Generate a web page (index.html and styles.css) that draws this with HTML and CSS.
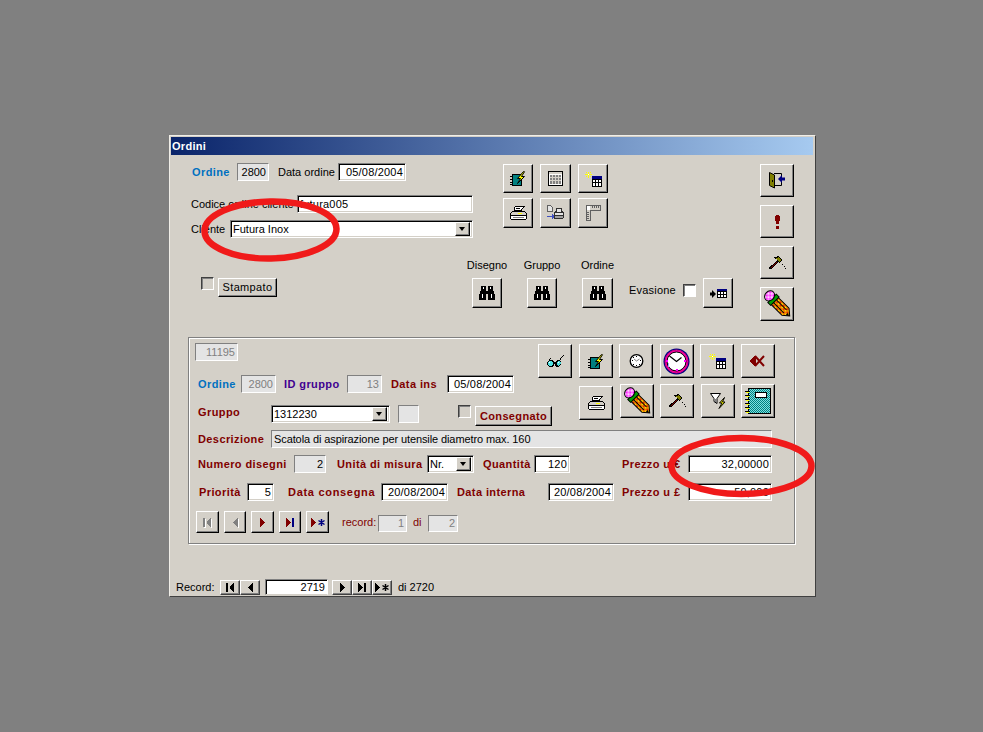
FILE: index.html
```html
<!DOCTYPE html>
<html lang="it">
<head>
<meta charset="utf-8">
<title>Ordini</title>
<link rel="stylesheet" href="styles.css">
</head>
<body>
<svg class="sprite" width="0" height="0" aria-hidden="true">
  <defs>
    <pattern id="pk" width="2" height="2" patternUnits="userSpaceOnUse"><rect width="2" height="2" fill="#fff"/><rect width="1" height="1" fill="#f0f"/><rect x="1" y="1" width="1" height="1" fill="#f0f"/></pattern>
    <pattern id="yr" width="2" height="2" patternUnits="userSpaceOnUse"><rect width="2" height="2" fill="#ff0"/><rect width="1" height="1" fill="#d00"/><rect x="1" y="1" width="1" height="1" fill="#d00"/></pattern>
    <pattern id="tl" width="2" height="2" patternUnits="userSpaceOnUse"><rect width="2" height="2" fill="#008080"/><rect width="1" height="1" fill="#7fe0e0"/><rect x="1" y="1" width="1" height="1" fill="#7fe0e0"/></pattern>
    <pattern id="mg" width="2" height="2" patternUnits="userSpaceOnUse"><rect width="2" height="2" fill="#f0a"/><rect width="1" height="1" fill="#e00090"/></pattern>
  </defs>
  <symbol id="bino" viewBox="0 0 16 14">
    <path fill="#000" d="M2 0h5v5h2V0h5v5h1v3h1v6H9V8H7v6H0V8h1V5h1z"/>
    <path fill="#fff" d="M3 8h1v4H3zM12 8h1v4h-1zM4 1h1v2H4zM11 1h1v2h-1z"/>
  </symbol>
  <symbol id="book" viewBox="0 0 16 15">
    <path fill="#000" d="M2 3h10v12H2z"/>
    <path fill="#008080" d="M3 4h8v10H3z"/>
    <path fill="#000" d="M0 5h3v1H0zM0 8h3v1H0zM0 11h3v1H0zM0 13h3v1H0z"/>
    <path fill="#ff0" stroke="#000" stroke-width="1" d="M13.500 .5 7.500 7.500h3l-3 5 7-7h-3l3-4.800z"/>
  </symbol>
  <symbol id="grid" viewBox="0 0 15 15">
    <path fill="#000" d="M0 0h15v15H0z"/>
    <path fill="#fff" d="M1 1h13v13H1z"/>
    <path fill="#d4d0c8" d="M1 1h13v2H1z"/>
    <path fill="#808080" d="M2 4h11v9H2z"/>
    <path fill="#d4d0c8" d="M4 4h1v9H4zM7 4h1v9H7zM10 4h1v9h-1zM2 6h11v1H2zM2 9h11v1H2z"/>
  </symbol>
  <symbol id="newtable" viewBox="0 0 17 16">
    <path fill="#ff0" d="M3 1h1v6H3zM0 3h7v1H0zM1 1h1v1H1zM5 1h1v1H5zM1 5h1v1H1zM5 5h1v1H5z"/>
    <path fill="#fff" d="M3 3h1v1H3z"/>
    <path fill="#000" d="M7 5h10v11H7z"/>
    <path fill="#000080" d="M7 5h10v3H7z"/>
    <path fill="#fff" d="M8 9h2v2H8zM11 9h2v2h-2zM14 9h2v2h-2zM8 12h2v3H8zM11 12h2v3h-2zM14 12h2v3h-2z"/>
  </symbol>
  <symbol id="print" viewBox="0 0 17 14">
    <path fill="#000" d="M5 0h10v1h-1v1h-1v1h-1v3h-2V5H4V1h1z"/>
    <path fill="#fff" d="M5 1h8v1h-1v1h-1v1H5z"/>
    <path fill="#000" d="M6 2h4v1H6z"/>
    <path fill="#000" d="M2 5h13v1h1v1h1v6h-1v1H1v-1H0V7h1V6h1z"/>
    <path fill="#d4d0c8" d="M2 6h13v1h1v2H1V7h1z"/>
    <path fill="#fff" d="M1 10h15v3H1z"/>
    <path fill="#000" d="M1 9h15v1H1z"/>
    <path fill="#ff0" d="M8 7h4v1H8z"/>
    <path fill="#808080" d="M3 11h11v1H3z"/>
  </symbol>
  <symbol id="preview" viewBox="0 0 17 17">
    <path fill="#606060" d="M0 0h4v1h1v1h1v5H0z"/>
    <path fill="#e4e4e4" d="M1 1h3v1h1v4H1z"/>
    <path fill="#4050c0" d="M0 11h5V9h1v1h1v1h1v1H7v1H6v1H5v-2H0z"/>
    <path fill="#303030" d="M9 3h6v3h1v1h1v6h-1v1H7V7h1V6h1z"/>
    <path fill="#e4e4e4" d="M10 4h4v3h-4zM8 8h8v2H8z"/>
    <path fill="#a0a0a0" d="M8 11h8v2H8z"/>
  </symbol>
  <symbol id="ruler" viewBox="0 0 16 16">
    <path fill="#606060" d="M1 0h15v6H6v10H1z"/>
    <path fill="#d4d0c8" d="M2 1h13v4H5v10H2z"/>
    <path fill="#606060" d="M7 1h1v2H7zM9 1h1v2H9zM11 1h1v2h-1zM13 1h1v2h-1zM2 7h2v1H2zM2 9h2v1H2zM2 11h2v1H2zM2 13h2v1H2z"/>
    <path fill="#fff" d="M2 1h3v4H2z"/>
  </symbol>
  <symbol id="door" viewBox="0 0 16 17">
    <path fill="none" stroke="#000" d="M5 1.500h7.500V4M5 13.500h7.500V10"/>
    <path fill="#808000" stroke="#000" d="M.5 .5l5 2.500v13l-5-2.500z"/>
    <path fill="#000" d="M3 8h1v2H3z"/>
    <path fill="#000080" d="M16 5.500h-3V3L9 7l4 4V8.500h3z"/>
  </symbol>
  <symbol id="bang" viewBox="0 0 5 14">
    <path fill="#800000" d="M1 0h3v1h1v5H4v3H1V6H0V1h1zM1 11h3v3H1z"/>
  </symbol>
  <symbol id="pick" viewBox="0 0 17 14">
    <path fill="#000" d="M5 1h3V0h2v1h1v1h1v1h1v2h-1v1h-1v1h-1V6H9v1H8v1H7v1H6v1H5v1H4v1H3v1H0v-2h1v-1h1v-1h1V9h1V8h1V7h1V6h1V5h1V4H8V3H6V2H5z"/>
    <path fill="#808000" d="M7 2h2V1h1v1h1v1h1v2h-1v1h-1V5H9V4H8V3H7z"/>
    <path fill="#800000" d="M1 12h1v-1h1v-1h1V9h1V8h1V7h1V6h1v1H7v1H6v1H5v1H4v1H3v1H1z"/>
    <path fill="#000" d="M13 8h1v1h-1zM15 10h1v1h-1zM16 12h1v1h-1z"/>
  </symbol>
  <symbol id="pencil" viewBox="0 0 28 29">
    <g transform="rotate(-45 14 14)">
      <path fill="url(#yr)" stroke="#000" d="M9.500 10.500h10v15l-5 6-5-6z"/>
      <path fill="#000" d="M12 11h1v14h-1zM16 11h1v14h-1z"/>
      <path fill="#000" d="M12.500 28h3l-1.500 3z"/>
      <path fill="#00a000" stroke="#000" d="M8.500 6.500h12v4h-12z"/>
      <ellipse cx="14.500" cy="3" rx="5.500" ry="4.500" fill="url(#pk)" stroke="#000"/>
    </g>
  </symbol>
  <symbol id="arrowtable" viewBox="0 0 17 9">
    <path fill="#000" d="M0 3h2V1h1v1h1v1h1v1h1v1H5v1H4v1H3v1H2V6H0z" transform="translate(0 .5)"/>
    <path fill="#000" d="M7 0h10v9H7z"/>
    <path fill="#000080" d="M7 0h10v2H7z"/>
    <path fill="#fff" d="M8 3h2v2H8zM11 3h2v2h-2zM14 3h2v2h-2zM8 6h2v2H8zM11 6h2v2h-2zM14 6h2v2h-2z"/>
  </symbol>
  <symbol id="glasses" viewBox="0 0 17 12">
    <path fill="#000" d="M1 6h1V5h4v1h1v1h2V6h1V5h3v1h1v4h-1v1h-1v1h-3v-1h-1V9H7v2H6v1H2v-1H1v-1H0V7h1z"/>
    <path fill="#4fe0e0" d="M2 6h3v1h1v3H5v1H2v-1H1V7h1zM11 6h2v1h1v2h-1v1h-1v1h-1v-1h-1V7h1z"/>
    <path fill="#fff" d="M2 7h1v1H2zM11 7h1v1h-1z"/>
    <path fill="#000" d="M2 4h1v1H2zM3 3h1v1H3zM13 3h1v2h-1zM14 2h1v1h-1zM15 1h1v1h-1zM16 0h1v1h-1z"/>
  </symbol>
  <symbol id="clocksm" viewBox="0 0 15 14">
    <circle cx="7.500" cy="7" r="6.300" fill="#fff" stroke="#000" stroke-width="1.300"/>
    <path fill="#000" d="M7 2h1v1H7zM3 6h1v1H3zM11 6h1v1h-1zM7 11h1v1H7zM4 3h1v1H4zM10 10h1v1h-1zM4 10h1v1H4z"/>
    <path stroke="#808080" d="M7.500 7 5 5M7.500 7l3-2"/>
  </symbol>
  <symbol id="clockbig" viewBox="0 0 27 27">
    <circle cx="13.500" cy="13.500" r="13" fill="#000080"/>
    <circle cx="13.500" cy="13.500" r="11.500" fill="url(#mg)" stroke="#d00080"/>
    <circle cx="13.500" cy="13.500" r="9.500" fill="#fff" stroke="#000"/>
    <path fill="none" stroke="#000" stroke-width="1.200" d="M6.500 8l7 5.500 5-4"/>
    <path fill="#f0f" d="M13 21h2v2h-2zM3 12h2v2H3zM21 12h2v2h-2z"/>
    <path fill="#a0a0ff" d="M5 15h1v4H5z"/>
  </symbol>
  <symbol id="xarrow" viewBox="0 0 15 12">
    <path fill="#800000" d="M0 5h1V4h1V3h1V2h1V1h2v10H4v-1H3V9H2V8H1V7H0z"/>
    <path fill="none" stroke="#800000" stroke-width="2" d="M5 1l9 10M14 1L5 11"/>
  </symbol>
  <symbol id="filterbolt" viewBox="0 0 16 16">
    <path fill="#fff" stroke="#000" d="M.5 .5h10L7 5.500v5l-3-2v-3z"/>
    <path fill="#808080" d="M5 6h1v3H5z"/>
    <path fill="#ff0" stroke="#000" d="M14.500 4.500 9.500 10h2.500l-3 5.500 6-6.500h-2.500l2-4.500z"/>
  </symbol>
  <symbol id="bigbook" viewBox="0 0 26 26">
    <path fill="#000" d="M3 0h23v26H3z"/>
    <path fill="url(#tl)" d="M4 1h21v24H4z"/>
    <path fill="#000" d="M10 4h12v6H10z"/>
    <path fill="#fff" d="M11 5h10v4H11z"/>
    <path fill="#000" d="M0 3h5v1H0zM0 7h5v1H0zM0 11h5v1H0zM0 15h5v1H0zM0 19h5v1H0zM0 23h5v1H0z"/>
    <path fill="#ff0" d="M1 4h3v1H1zM1 8h3v1H1zM1 12h3v1H1zM1 16h3v1H1zM1 20h3v1H1zM1 24h3v1H1z"/>
  </symbol>
  <symbol id="n-first" viewBox="0 0 9 9"><path d="M0 0h2v9H0zM8 0v9H7V8H6V7H5V6H4V3h1V2h1V1h1V0z"/></symbol>
  <symbol id="n-prev" viewBox="0 0 9 9"><path d="M7 0v9H6V8H5V7H4V6H3V5H2V4h1V3h1V2h1V1h1V0z"/></symbol>
  <symbol id="n-next" viewBox="0 0 9 9"><path d="M2 0v9h1V8h1V7h1V6h1V5h1V4H6V3H5V2H4V1H3V0z"/></symbol>
  <symbol id="n-last" viewBox="0 0 9 9"><path d="M0 0v9h1V8h1V7h1V6h1V5h1V4H4V3H3V2H2V1H1V0z"/><path class="accent" d="M6 0h2v9H6z"/></symbol>
  <symbol id="n-new" viewBox="0 0 14 9"><path d="M0 0v9h1V8h1V7h1V6h1V5h1V4H4V3H3V2H2V1H1V0z"/><path class="star" fill="none" stroke-width="1.500" d="M10.500 1v7M7.500 2.500l6 4M13.500 2.500l-6 4"/></symbol>
</svg>

<main class="window">
  <header class="titlebar">Ordini</header>
  <div class="form">
    <section class="top">
      <div class="top-main">
        <div class="top-fields">
          <div class="fields">
            <div class="row row-order">
              <span class="lb lb-blue lb-first">Ordine</span>
              <span class="box w-32 text-dark">2800</span>
              <span class="lb ml-9 w-60">Data ordine</span>
              <span class="input w-68">05/08/2004</span>
            </div>
            <div class="row row-code">
              <span class="lb w-106">Codice ordine cliente</span>
              <span class="input text-left w-176">futura005</span>
            </div>
            <div class="row row-client">
              <span class="lb w-39">Cliente</span>
              <span class="input combo w-243"><span class="combo-text">Futura Inox</span><span class="combo-btn"></span></span>
            </div>
          </div>
          <div class="tool-grid">
            <button class="btn"><svg width="16" height="15"><use href="#book"/></svg></button>
            <button class="btn"><svg width="15" height="15"><use href="#grid"/></svg></button>
            <button class="btn"><svg width="17" height="16"><use href="#newtable"/></svg></button>
            <button class="btn"><svg width="17" height="14"><use href="#print"/></svg></button>
            <button class="btn"><svg width="17" height="17"><use href="#preview"/></svg></button>
            <button class="btn"><svg width="16" height="16"><use href="#ruler"/></svg></button>
          </div>
        </div>
        <div class="top-actions">
          <span class="check check-stamp"></span>
          <button class="btn btn-text btn-stamp">Stampato</button>
          <div class="finders">
            <div class="finder"><span class="lb finder-label">Disegno</span><button class="btn btn-find"><svg width="16" height="14"><use href="#bino"/></svg></button></div>
            <div class="finder"><span class="lb finder-label">Gruppo</span><button class="btn btn-find"><svg width="16" height="14"><use href="#bino"/></svg></button></div>
            <div class="finder finder-wide"><span class="lb finder-label">Ordine</span><button class="btn btn-find"><svg width="16" height="14"><use href="#bino"/></svg></button></div>
          </div>
          <div class="evasione">
            <span class="lb lb-spaced w-54">Evasione</span>
            <span class="check check-white"></span>
            <button class="btn btn-find ml-7"><svg width="17" height="9"><use href="#arrowtable"/></svg></button>
          </div>
        </div>
      </div>
      <div class="side-tools">
        <button class="btn btn-lg"><svg width="16" height="17"><use href="#door"/></svg></button>
        <button class="btn btn-lg"><svg width="5" height="14"><use href="#bang"/></svg></button>
        <button class="btn btn-lg"><svg width="17" height="14"><use href="#pick"/></svg></button>
        <button class="btn btn-lg"><svg width="28" height="29"><use href="#pencil"/></svg></button>
      </div>
    </section>

    <section class="panel">
      <div class="panel-upper">
        <div class="panel-fields">
          <span class="box box-id w-43">11195</span>
          <div class="row row-p1">
            <span class="lb lb-b lb-blue ml-3 w-43">Ordine</span>
            <span class="box w-35">2800</span>
            <span class="lb lb-b lb-purple ml-8 w-63">ID gruppo</span>
            <span class="box w-35">13</span>
            <span class="lb lb-b lb-red ml-9 w-56">Data ins</span>
            <span class="input w-67">05/08/2004</span>
          </div>
          <div class="row row-p2">
            <span class="lb lb-b lb-red ml-3 w-73">Gruppo</span>
            <span class="input combo w-119"><span class="combo-text">1312230</span><span class="combo-btn"></span></span>
            <span class="box ml-8 w-21 h-18"></span>
            <span class="check ml-39"></span>
            <button class="btn btn-text btn-conseg ml-4">Consegnato</button>
          </div>
        </div>
        <div class="panel-tools">
          <div class="tools-row tools-row-first">
            <button class="btn btn-lg"><svg width="17" height="12"><use href="#glasses"/></svg></button>
            <button class="btn btn-lg"><svg width="16" height="15"><use href="#book"/></svg></button>
            <button class="btn btn-lg"><svg width="15" height="14"><use href="#clocksm"/></svg></button>
            <button class="btn btn-lg"><svg width="27" height="27"><use href="#clockbig"/></svg></button>
            <button class="btn btn-lg"><svg width="17" height="16"><use href="#newtable"/></svg></button>
            <button class="btn btn-lg"><svg width="15" height="12"><use href="#xarrow"/></svg></button>
          </div>
          <div class="tools-row tools-row-second">
            <button class="btn btn-lg btn-drop"><svg width="17" height="14"><use href="#print"/></svg></button>
            <button class="btn btn-lg"><svg width="28" height="29"><use href="#pencil"/></svg></button>
            <button class="btn btn-lg"><svg width="17" height="14"><use href="#pick"/></svg></button>
            <button class="btn btn-lg"><svg width="16" height="16"><use href="#filterbolt"/></svg></button>
            <button class="btn btn-lg"><svg width="26" height="26"><use href="#bigbook"/></svg></button>
          </div>
        </div>
      </div>
      <div class="row">
        <span class="lb lb-b lb-red ml-3 w-73">Descrizione</span>
        <span class="box box-desc text-left text-dark w-501">Scatola di aspirazione per utensile diametro max. 160</span>
      </div>
      <div class="row row-p4">
        <span class="lb lb-b lb-red ml-3 w-96">Numero disegni</span>
        <span class="box w-32 text-dark">2</span>
        <span class="lb lb-b lb-red ml-11 w-90">Unità di misura</span>
        <span class="input combo w-47"><span class="combo-text">Nr.</span><span class="combo-btn"></span></span>
        <span class="lb lb-b lb-red ml-9 w-51">Quantità</span>
        <span class="input w-36">120</span>
        <span class="lb lb-b lb-red ml-52 w-66">Prezzo u €</span>
        <span class="input w-84">32,00000</span>
      </div>
      <div class="row row-p5">
        <span class="lb lb-b lb-red ml-4 w-48">Priorità</span>
        <span class="input w-27">5</span>
        <span class="lb lb-b lb-wide lb-red ml-14 w-93">Data consegna</span>
        <span class="input w-67">20/08/2004</span>
        <span class="lb lb-b lb-red ml-9 w-91">Data interna</span>
        <span class="input w-66">20/08/2004</span>
        <span class="lb lb-b lb-red ml-8 w-66">Prezzo u £</span>
        <span class="input w-84">59,000</span>
      </div>
      <div class="row row-p6">
        <div class="pager">
          <button class="btn btn-nav off w-23"><svg width="9" height="9"><use href="#n-first"/></svg></button>
          <button class="btn btn-nav off w-22"><svg width="9" height="9"><use href="#n-prev"/></svg></button>
          <button class="btn btn-nav w-23 red"><svg width="9" height="9"><use href="#n-next"/></svg></button>
          <button class="btn btn-nav w-22 red"><svg width="9" height="9"><use href="#n-last"/></svg></button>
          <button class="btn btn-nav w-23 red"><svg width="14" height="9"><use href="#n-new"/></svg></button>
        </div>
        <span class="lb lb-red ml-13 w-36">record:</span>
        <span class="box box-sm w-29">1</span>
        <span class="lb lb-red ml-6 w-15">di</span>
        <span class="box box-sm w-30">2</span>
      </div>
    </section>

    <footer class="recordbar">
      <span class="lb w-44">Record:</span>
      <button class="btn btn-rec w-20"><svg width="9" height="9"><use href="#n-first"/></svg></button>
      <button class="btn btn-rec w-20"><svg width="9" height="9"><use href="#n-prev"/></svg></button>
      <span class="rec-input">2719</span>
      <button class="btn btn-rec w-20"><svg width="9" height="9"><use href="#n-next"/></svg></button>
      <button class="btn btn-rec w-20"><svg width="9" height="9"><use href="#n-last"/></svg></button>
      <button class="btn btn-rec w-20"><svg width="14" height="9"><use href="#n-new"/></svg></button>
      <span class="lb ml-6">di 2720</span>
    </footer>
  </div>
</main>

<svg class="marks" width="983" height="732" aria-hidden="true">
  <ellipse cx="270.500" cy="230" rx="66" ry="28.500" fill="none" stroke="#f01a1a" stroke-width="6.500" transform="rotate(-1 270 230)"/>
  <ellipse cx="741.500" cy="466" rx="70" ry="28" fill="none" stroke="#f01a1a" stroke-width="6.500"/>
</svg>
</body>
</html>
```

FILE: styles.css
```css
* { box-sizing: border-box; }

html, body { margin: 0; height: 100%; }

body {
  background: #808080;
  padding: 135px 0 0 169px;
  font: 11px/1 "Liberation Sans", Arial, sans-serif;
  color: #000;
  overflow: hidden;
}

.sprite { position: absolute; }

.marks {
  position: absolute;
  left: 0;
  top: 0;
  pointer-events: none;
  filter: blur(.4px);
}

svg { display: block; }

.window {
  width: 647px;
  height: 462px;
  background: #d4d0c8;
  border: 1px solid;
  border-color: #f0eee8 #404040 #404040 #f0eee8;
  padding: 1px;
}

.titlebar {
  height: 18px;
  width: 642px;
  padding-left: 1px;
  color: #fff;
  font-weight: 700;
  font-size: 11px;
  line-height: 18px;
  letter-spacing: .3px;
  background: linear-gradient(90deg, #0a246a, #a6caf0);
}

.form { width: 642px; }

/* shared controls */
.row { display: flex; align-items: center; height: 18px; }

.lb { display: block; white-space: nowrap; flex: none; }
.lb-spaced { letter-spacing: .2px; }
.lb-b { font-weight: 700; letter-spacing: .4px; }
.lb-wide { letter-spacing: .7px; }
.lb-blue { color: #0070c0; font-weight: 700; letter-spacing: .4px; }
.lb-first { width: 46px; padding-left: 1px; }
.lb-purple { color: #400090; }
.lb-red { color: #800000; }

.box, .input {
  display: flex;
  align-items: center;
  justify-content: flex-end;
  flex: none;
  height: 18px;
  padding: 0 2px;
  border: 1px solid;
  border-color: #808080 #fff #fff #808080;
  white-space: nowrap;
}

.box { background: #e4e4e4; color: #808080; }
.box-sm { height: 17px; margin-top: 3px; }
.input {
  background: #fff;
  box-shadow: inset 1px 1px 0 #000, inset -1px -1px 0 #d4d0c8;
  letter-spacing: .2px;
}
.text-left { justify-content: flex-start; }
.text-dark { color: #000; }
.box-desc { letter-spacing: -.1px; padding-left: 2px; }

.combo { justify-content: space-between; padding: 2px; letter-spacing: 0; }
.combo-btn {
  position: relative;
  flex: none;
  width: 15px;
  height: 14px;
  background: #d4d0c8;
  border: 1px solid;
  border-color: #fff #000 #000 #fff;
  box-shadow: inset -1px -1px 0 #808080;
}
.combo-btn::after {
  content: "";
  position: absolute;
  left: 3px;
  top: 4px;
  border: 3px solid transparent;
  border-top: 4px solid #000;
  border-bottom: 0;
}

.check {
  display: block;
  flex: none;
  width: 13px;
  height: 13px;
  border: 1px solid;
  border-color: #404040 #fff #fff #404040;
  box-shadow: inset 1px 1px 0 #808080;
}
.check-white { background: #fff; }

.btn {
  display: flex;
  align-items: center;
  justify-content: center;
  flex: none;
  margin: 0;
  padding: 0;
  background: #d4d0c8;
  border: 1px solid;
  border-color: #fff #000 #000 #fff;
  box-shadow: inset -1px -1px 0 #808080;
  font: inherit;
  color: inherit;
}
.btn svg { fill: currentColor; }
.btn-text { letter-spacing: .35px; }

/* top part */
.top { display: flex; height: 182px; }
.top-main { width: 589px; flex: none; }
.top-fields { display: flex; height: 103px; padding-top: 8px; }
.fields { width: 332px; flex: none; padding-left: 20px; }
.row-code { margin-top: 14px; }
.row-client { margin-top: 7px; }

.tool-grid {
  display: grid;
  grid-template-columns: 30px 31px 30px;
  grid-template-rows: 29px 30px;
  gap: 5px 7px;
  padding-top: 1px;
}

.top-actions { display: flex; height: 50px; }
.check-stamp { margin: 19px 0 0 30px; }
.btn-stamp { width: 59px; height: 19px; margin: 20px 0 0 4px; }
.finders { display: flex; gap: 25px; margin-left: 195px; }
.finder { display: flex; flex-direction: column; align-items: center; width: 30px; }
.finder-wide { width: 31px; }
.finder-label { height: 20px; line-height: 14px; }
.btn-find { width: 30px; height: 30px; }
.finder-wide .btn-find { width: 31px; }
.evasione { display: flex; align-items: flex-end; margin-left: 16px; }
.evasione .lb { margin-bottom: 12px; }
.evasione .check { margin-bottom: 11px; }

.side-tools { display: flex; flex-direction: column; gap: 8px; padding-top: 9px; }
.btn-lg { width: 34px; height: 34px; }
.side-tools .btn-lg:nth-child(-n+3) { height: 33px; }

/* inner panel */
.panel {
  width: 607px;
  height: 207px;
  margin-left: 17px;
  padding: 5px 0 0 6px;
  border: 1px solid #808080;
  box-shadow: inset 1px 1px 0 #fff, 1px 1px 0 #fff;
}
.panel-upper { display: flex; height: 87px; }
.panel-fields { width: 384px; flex: none; }
.row-p1 { margin-top: 14px; }
.row-p2 { margin-top: 12px; align-items: flex-start; height: 21px; }
.row-p2 > .lb { margin-top: 2px; }
.btn-conseg { width: 77px; height: 20px; margin-top: 1px; color: #800000; font-weight: 700; }

.panel-tools { display: flex; flex-direction: column; gap: 6px; padding-top: 1px; }
.tools-row { display: flex; gap: 6.500px; }
.tools-row-first { margin-left: -41px; }
.btn-drop { margin-top: 2px; }

.row-p4 { margin-top: 7px; }
.row-p5 { margin-top: 10px; }
.row-p6 { margin-top: 10px; height: 22px; }

.pager { display: flex; gap: 5px; margin-left: 1px; }
.btn-nav { height: 22px; --accent: #000080; }
.btn-nav.red { color: #800000; }
.btn-nav.off { color: #808080; }
.btn-nav.off svg { filter: drop-shadow(1px 1px 0 #fff); }
.star { stroke: var(--accent); }
.accent { fill: var(--accent); }

/* record bar */
.recordbar {
  display: flex;
  align-items: center;
  height: 16px;
  margin-top: 35px;
  padding-left: 5px;
}
.btn-rec { height: 15px; border-color: #fff #404040 #404040 #fff; --accent: #000; }
.recordbar .btn-rec + .rec-input { margin-left: 5px; }
.rec-input {
  display: flex;
  align-items: center;
  justify-content: flex-end;
  width: 63px;
  height: 16px;
  margin-right: 4px;
  padding-right: 2px;
  background: #fff;
  border: 1px solid;
  border-color: #808080 #fff #d4d0c8 #808080;
  box-shadow: inset 1px 1px 0 #000;
}

/* sizes */
.w-15 { width: 15px; } .w-20 { width: 20px; } .w-21 { width: 21px; } .w-22 { width: 22px; }
.w-23 { width: 23px; } .w-27 { width: 27px; } .w-29 { width: 29px; } .w-30 { width: 30px; }
.w-32 { width: 32px; } .w-35 { width: 35px; } .w-36 { width: 36px; } .w-39 { width: 39px; }
.w-43 { width: 43px; } .w-44 { width: 44px; } .w-47 { width: 47px; }
.w-48 { width: 48px; } .w-51 { width: 51px; } .w-54 { width: 54px; } .w-56 { width: 56px; }
.w-60 { width: 60px; } .w-63 { width: 63px; } .w-66 { width: 66px; } .w-67 { width: 67px; }
.w-68 { width: 68px; } .w-73 { width: 73px; } .w-84 { width: 84px; } .w-90 { width: 90px; }
.w-91 { width: 91px; } .w-93 { width: 93px; } .w-96 { width: 96px; } .w-106 { width: 106px; }
.w-119 { width: 119px; } .w-176 { width: 176px; } .w-243 { width: 243px; } .w-501 { width: 501px; }
.h-18 { height: 18px; }
.ml-3 { margin-left: 3px; } .ml-4 { margin-left: 4px; } .ml-6 { margin-left: 6px; }
.ml-7 { margin-left: 7px; } .ml-8 { margin-left: 8px; } .ml-9 { margin-left: 9px; }
.ml-11 { margin-left: 11px; } .ml-13 { margin-left: 13px; } .ml-14 { margin-left: 14px; }
.ml-39 { margin-left: 39px; } .ml-52 { margin-left: 52px; }
```
